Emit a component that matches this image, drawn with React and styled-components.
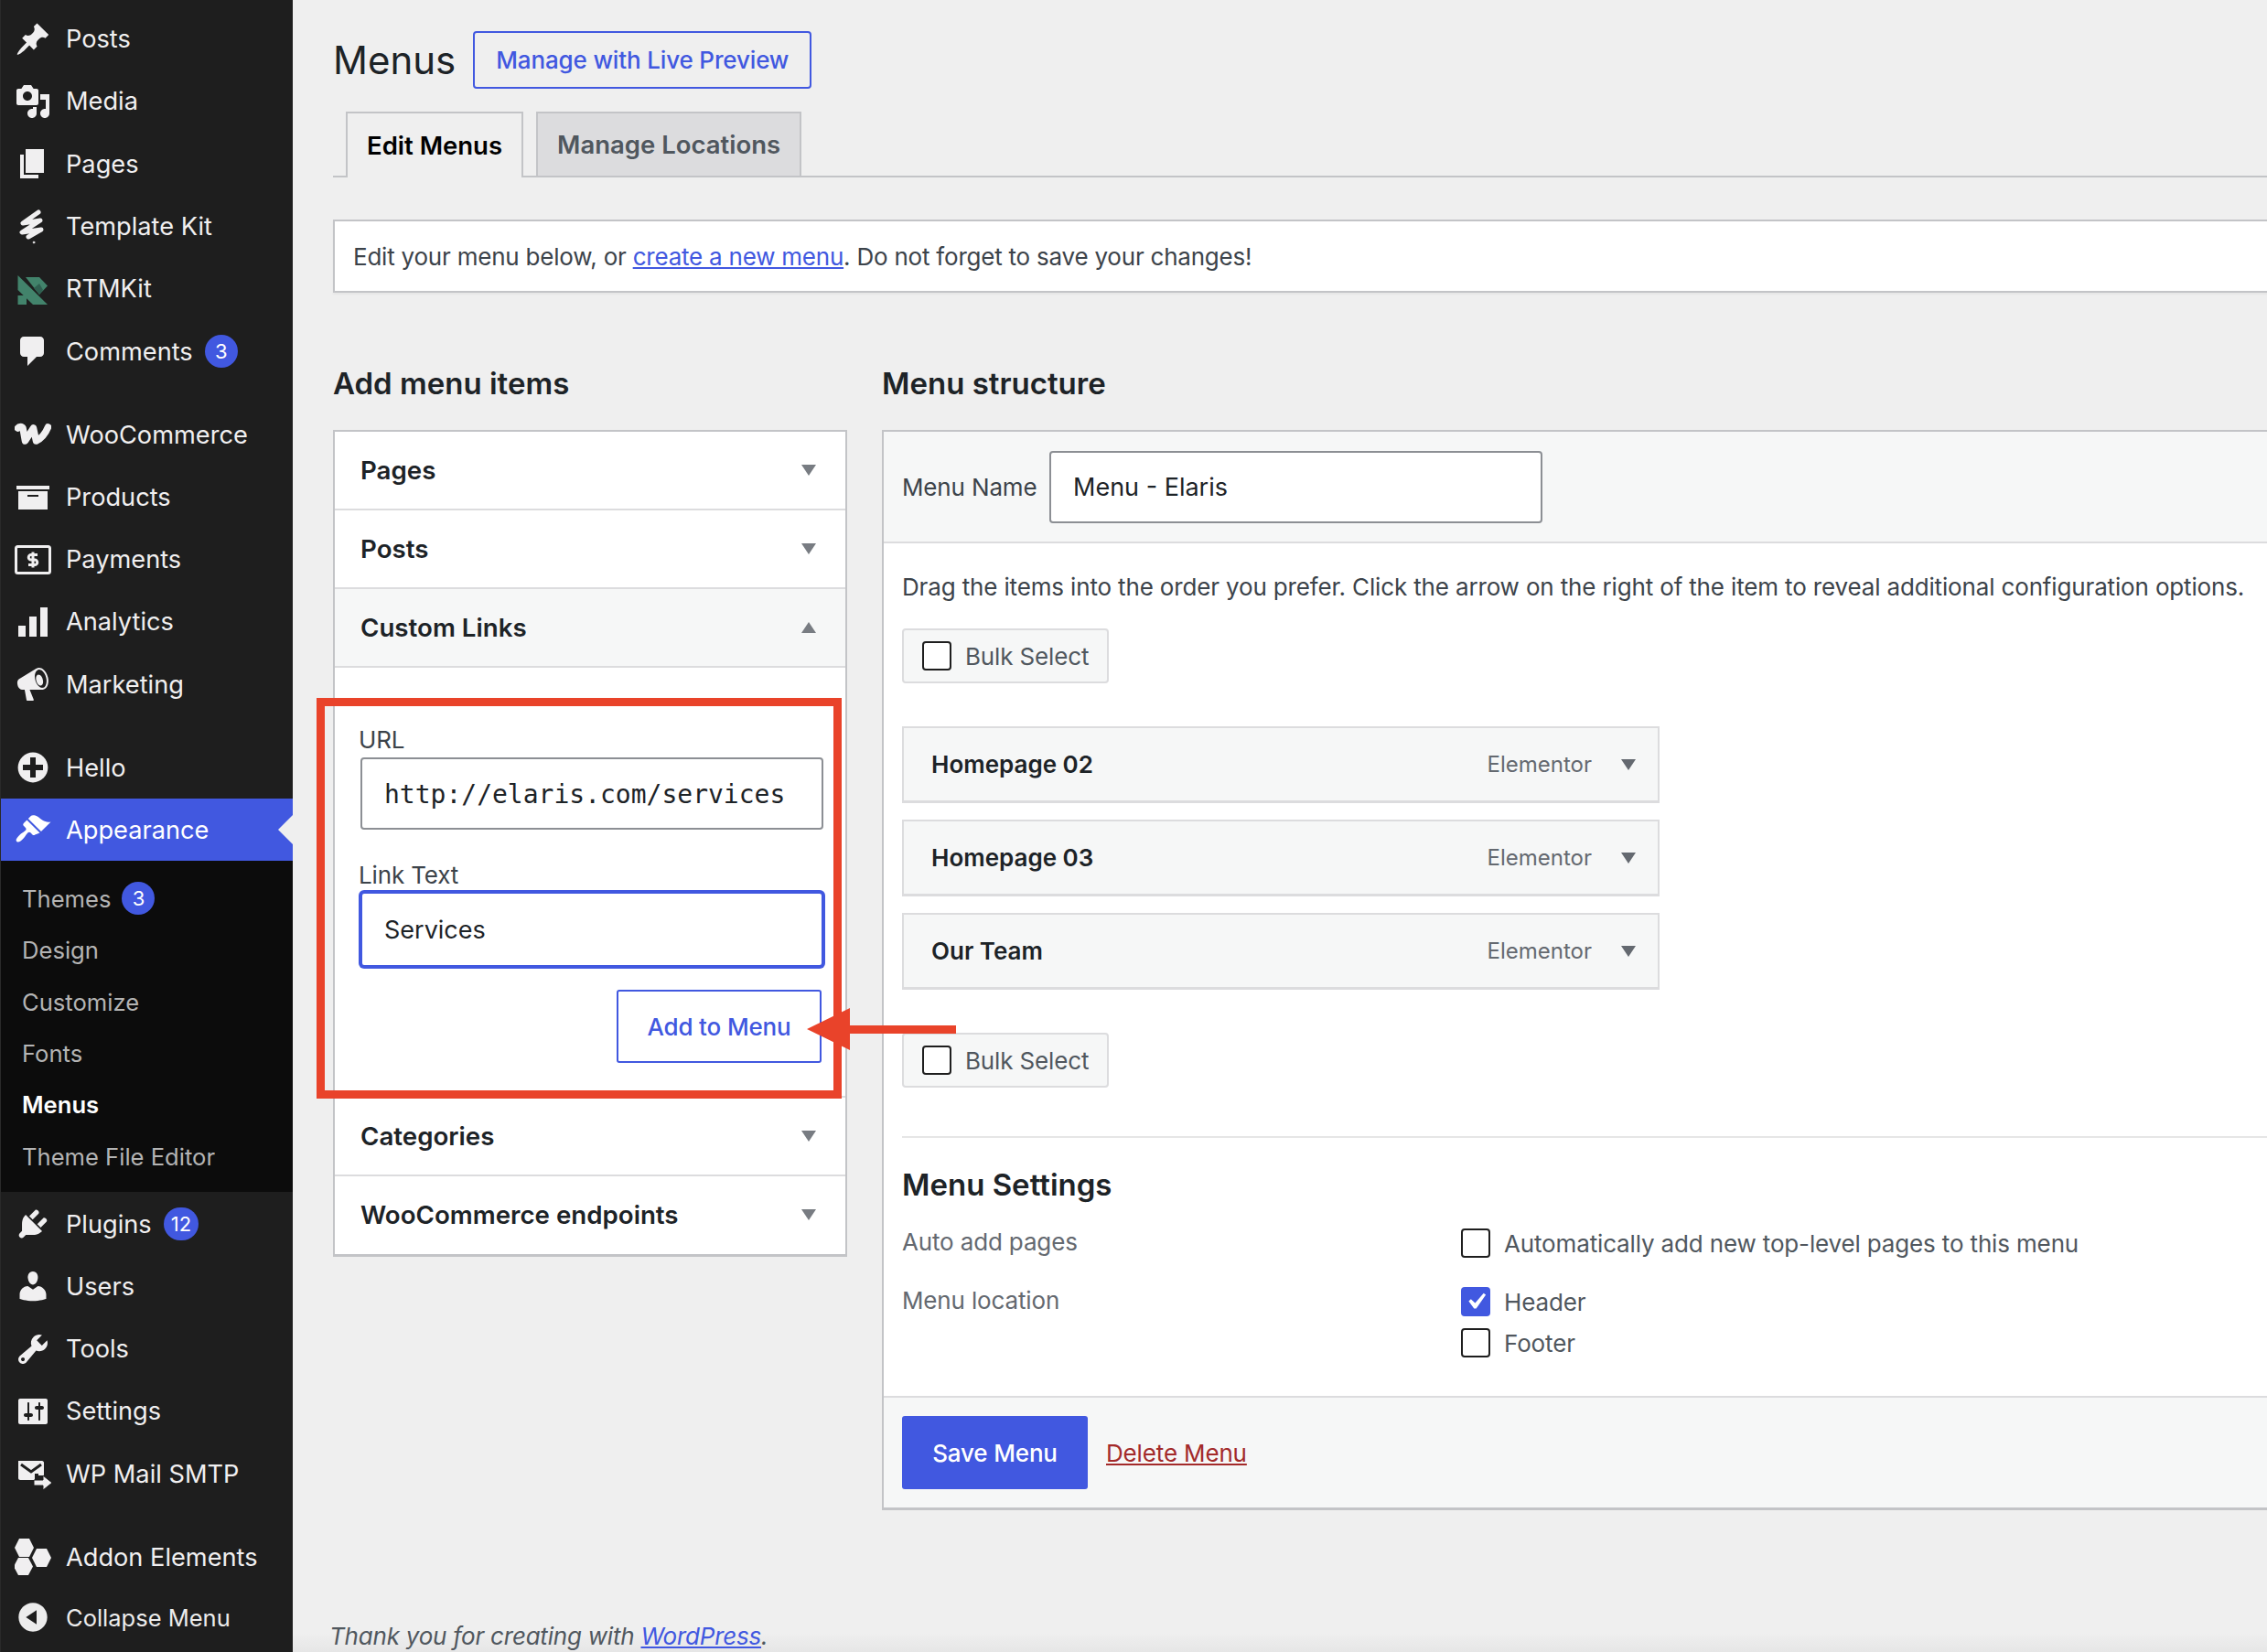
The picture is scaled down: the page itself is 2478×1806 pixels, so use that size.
import styled, { createGlobalStyle } from "styled-components";

const BLUE = "#4158e0";

const GlobalStyle = createGlobalStyle`
  html, body {
    margin: 0;
    padding: 0;
    width: 2478px;
    height: 1806px;
    overflow: hidden;
    background: #efefef;
  }
  * {
    box-sizing: border-box;
  }
  body {
    font-family: Inter, "Liberation Sans", sans-serif;
    font-size: 26px;
    letter-spacing: -0.15px;
    color: #3c434a;
  }
`;

const dash = {
  post: "M10.44 3.02l1.82-1.82 6.36 6.35-1.83 1.82c-1.05-.68-2.48-.57-3.41.36l-.75.75c-.92.93-1.04 2.35-.35 3.41l-1.83 1.82-2.41-2.41-2.8 2.79c-.42.42-3.38 2.71-3.8 2.29s1.86-3.39 2.28-3.81l2.79-2.79L4.1 9.36l1.83-1.82c1.05.69 2.48.57 3.4-.36l.75-.75c.93-.92 1.05-2.35.36-3.41z",
  media: "M13 11V4c0-.55-.45-1-1-1h-1.67L9 1H5L3.67 3H2c-.55 0-1 .45-1 1v7c0 .55.45 1 1 1h10c.55 0 1-.45 1-1zM7 4.5c1.38 0 2.5 1.12 2.5 2.5S8.38 9.5 7 9.5 4.5 8.38 4.5 7 5.62 4.5 7 4.5zM14 6h5v10.5c0 1.38-1.12 2.5-2.5 2.5S14 17.88 14 16.5s1.12-2.5 2.5-2.5c.17 0 .34.02.5.05V9h-3V6zm-4 8.05V13h2v3.5c0 1.38-1.12 2.5-2.5 2.5S7 17.88 7 16.5 8.12 14 9.5 14c.17 0 .34.02.5.05z",
  page: "M6 15V2h10v13H6zm-1 1h8v2H3V5h2v11z",
  comment: "M5 2h9c1.1 0 2 .9 2 2v7c0 1.1-.9 2-2 2h-2l-5 5v-5H5c-1.1 0-2-.9-2-2V4c0-1.1.9-2 2-2z",
  archive: "M19 4v2H1V4h18zM2 7h16v10H2V7zm11 3V9H7v1h6z",
  bars: "M18 18V2h-4v16h4zm-6 0V7H8v11h4zm-6 0v-6H2v6h4z",
  megaphone: "M18.15 5.94c.46 1.62.38 3.22-.02 4.48-.42 1.28-1.26 2.18-2.3 2.48-.16.06-.26.06-.4.06-.06.02-.12.02-.18.02-.06.02-.14.02-.22.02h-6.8l2.22 5.5c.02.14-.06.26-.14.34-.08.1-.24.16-.34.16H6.95c-.1 0-.26-.06-.34-.16-.08-.08-.16-.2-.14-.34l-1-5.5H4.25l-.02-.02c-.5.06-1.08-.18-1.54-.62s-.88-1.08-1.06-1.88c-.24-.8-.2-1.56-.02-2.2.18-.62.58-1.08 1.06-1.3l.02-.02 9-5.4c.1-.06.18-.1.24-.16.06-.04.14-.08.24-.12.16-.08.28-.12.5-.18 1.04-.3 2.24.1 3.22.98s1.76 2.18 2.22 3.86zm-2.58 5.98h-.02c.4-.1.74-.34 1.04-.7.58-.7.86-1.76.86-3.04-.02-.64-.1-1.3-.28-1.98-.34-1.36-1.02-2.5-1.78-3.24s-1.68-1.1-2.46-.88c-.82.22-1.4.96-1.7 2-.32 1.04-.28 2.36.06 3.72.38 1.36 1 2.5 1.8 3.24.78.74 1.62 1.1 2.48.88zm-2.54-7.08c.22-.04.42-.02.62.04.38.16.76.48 1.1 1s.58 1.14.7 1.84c.14.7.14 1.32-.02 1.86-.14.52-.42.9-.76 1.1-.34.2-.72.16-1.1-.04-.4-.18-.76-.52-1.1-1.02-.34-.52-.58-1.14-.7-1.84-.12-.7-.12-1.34.02-1.86.16-.54.44-.9.8-1.08.14-.06.28-.08.44-.1z",
  plus: "M15.8 4.2c3.2 3.21 3.2 8.39 0 11.6-3.21 3.2-8.39 3.2-11.6 0C1 12.59 1 7.41 4.2 4.2 7.41 1 12.59 1 15.8 4.2zm-4.3 11.3v-4h4v-3h-4v-4h-3v4h-4v3h4v4h3z",
  brush: "M14.48 11.06L7.41 3.99l1.5-1.5c.5-.56 2.3-.47 3.51.32 1.21.8 1.43 1.28 2.91 2.1 1.18.64 2.45 1.26 4.45.85zm-.71.71L6.7 4.7 4.93 6.47c-.39.39-.39 1.02 0 1.41l1.06 1.06c.39.39.39 1.03 0 1.42-.6.6-1.43 1.11-2.21 1.69-.35.26-.7.53-1.01.84-1.34 1.33-2.5 2.7-1.62 3.58.88.88 2.25-.28 3.58-1.62.31-.31.58-.66.84-1.01.58-.78 1.09-1.61 1.69-2.21.39-.39 1.03-.39 1.42 0l1.06 1.06c.39.39 1.02.39 1.41 0z",
  plugin: "M13.11 4.36L9.87 7.6 8 5.73l3.24-3.24c.35-.34 1.05-.2 1.56.32.52.51.66 1.21.31 1.55zm-8 1.77l.91-1.12 9.01 9.01-1.19.84c-.71.71-2.63 1.16-3.82 1.16H6.14L4.9 17.26c-.59.59-1.54.59-2.12 0-.59-.58-.59-1.53 0-2.12l1.24-1.24v-3.88c0-1.13.4-3.19 1.09-3.89zm7.26 3.97l3.24-3.24c.34-.35 1.04-.21 1.55.31.52.51.66 1.21.31 1.55l-3.24 3.25z",
  users: "M10 9.25c-2.27 0-2.73-3.44-2.73-3.44C7 4.02 7.82 2 9.97 2c2.16 0 2.98 2.02 2.71 3.81 0 0-.41 3.44-2.68 3.44zm0 2.57L12.72 10c2.39 0 4.52 2.33 4.52 4.53v2.49s-3.65 1.13-7.24 1.13c-3.65 0-7.24-1.13-7.24-1.13v-2.49c0-2.25 1.94-4.48 4.47-4.48z",
  tools: "M16.68 9.77c-1.34 1.34-3.3 1.67-4.95.99l-5.41 6.52c-.99.99-2.59.99-3.58 0s-.99-2.59 0-3.57l6.52-5.42c-.68-1.65-.35-3.61.99-4.95 1.28-1.28 3.12-1.62 4.72-1.06l-2.89 2.89 2.82 2.82 2.86-2.87c.53 1.58.18 3.39-1.08 4.65zM3.81 16.21c.4.39 1.04.39 1.43 0 .4-.4.4-1.04 0-1.43-.39-.4-1.03-.4-1.43 0-.39.39-.39 1.03 0 1.43z",
  settings: "M18 16V4c0-.55-.45-1-1-1H3c-.55 0-1 .45-1 1v12c0 .55.45 1 1 1h14c.55 0 1-.45 1-1zM8 11h1c.55 0 1 .45 1 1s-.45 1-1 1H8v1.5c0 .28-.22.5-.5.5s-.5-.22-.5-.5V13H6c-.55 0-1-.45-1-1s.45-1 1-1h1V5.5c0-.28.22-.5.5-.5s.5.22.5.5V11zm5-2h-1c-.55 0-1-.45-1-1s.45-1 1-1h1V5.5c0-.28.22-.5.5-.5s.5.22.5.5V7h1c.55 0 1 .45 1 1s-.45 1-1 1h-1v5.5c0 .28-.22.5-.5.5s-.5-.22-.5-.5V9z",
  collapse: "M10 2.16c4.33 0 7.84 3.51 7.84 7.84s-3.51 7.84-7.84 7.84S2.16 14.33 2.16 10 5.71 2.16 10 2.16zm2 11.72V6.12L6.18 9.97z",
};

const Dash = ({ name }) => (
  <svg width="40" height="40" viewBox="0 0 20 20" fill="currentColor">
    <path d={dash[name]} />
  </svg>
);

const TemplateKitIcon = () => (
  <svg width="40" height="40" viewBox="0 0 40 40" fill="none" stroke="currentColor" strokeWidth="5" strokeLinecap="round" strokeLinejoin="round">
    <path d="M26 4 L9 16 L28 13 L8 26 L29 23 L15 31" />
    <circle cx="21" cy="37" r="1" fill="currentColor" strokeWidth="0.6" />
  </svg>
);

const RtmIcon = () => (
  <svg width="40" height="40" viewBox="0 0 40 40">
    <g fill="#42836b">
      <polygon points="3.5,5 3.5,21 20,37 36,37" />
      <polygon points="12,7 27,7 36,16.5 27,26" />
      <polygon points="3.5,27 13,27 13,37 3.5,37" />
    </g>
    <polygon points="21,19 27,14 31,21 27,26" fill="#2f5f50" />
  </svg>
);

const WooIcon = () => (
  <svg width="40" height="40" viewBox="0 0 40 40" fill="none" stroke="currentColor" strokeWidth="7.5" strokeLinecap="round" strokeLinejoin="round">
    <path d="M3.5 13 C5 11 8 11 9 13 L11.5 27 L20.5 13 L23.5 27 C30 24 34 18 36.5 12" />
  </svg>
);

const PaymentsIcon = () => (
  <svg width="40" height="40" viewBox="0 0 40 40" fill="none" stroke="currentColor">
    <rect x="1.5" y="5.5" width="37" height="29" rx="2" strokeWidth="3" />
    <path d="M25 14.5h-7a2.5 2.5 0 0 0 0 5.5h4a2.5 2.5 0 0 1 0 5.5h-7" strokeWidth="3" />
    <path d="M20 11.5v17" strokeWidth="3" />
  </svg>
);

const MailIcon = () => (
  <svg width="40" height="40" viewBox="0 0 40 40">
    <path d="M4 6h26c1 0 2 1 2 2v14h-6v-2h-4v7H6c-1 0-2-1-2-2z" fill="currentColor" />
    <path d="M7 10l11 8 11-8" fill="none" stroke="#1e1e1e" strokeWidth="3" />
    <path d="M21 27h10v-5l10 8-10 8v-5H21z" fill="currentColor" stroke="#1e1e1e" strokeWidth="1" />
  </svg>
);

const AddonIcon = () => (
  <svg width="40" height="40" viewBox="0 0 40 40" fill="currentColor">
    <polygon points="5,0 16,0 21,10 16,20 5,20 0,10" />
    <polygon points="24,11 35,11 40,21 35,31 24,31 19,21" />
    <polygon points="4,21 15,21 20,30.5 15,40 4,40 -1,30.5" />
  </svg>
);

const mainItems = [
  [
    { label: "Posts", icon: <Dash name="post" /> },
    { label: "Media", icon: <Dash name="media" /> },
    { label: "Pages", icon: <Dash name="page" /> },
    { label: "Template Kit", icon: <TemplateKitIcon /> },
    { label: "RTMKit", icon: <RtmIcon /> },
    { label: "Comments", icon: <Dash name="comment" />, badge: "3" },
  ],
  [
    { label: "WooCommerce", icon: <WooIcon /> },
    { label: "Products", icon: <Dash name="archive" /> },
    { label: "Payments", icon: <PaymentsIcon /> },
    { label: "Analytics", icon: <Dash name="bars" /> },
    { label: "Marketing", icon: <Dash name="megaphone" /> },
  ],
];

const lowerItems = [
  { label: "Plugins", icon: <Dash name="plugin" />, badge: "12" },
  { label: "Users", icon: <Dash name="users" /> },
  { label: "Tools", icon: <Dash name="tools" /> },
  { label: "Settings", icon: <Dash name="settings" /> },
  { label: "WP Mail SMTP", icon: <MailIcon /> },
];

const subItems = ["Design", "Customize", "Fonts", "Menus", "Theme File Editor"];
const accordionTop = ["Pages", "Posts"];
const accordionBottom = ["Categories", "WooCommerce endpoints"];
const structureItems = ["Homepage 02", "Homepage 03", "Our Team"];

function SideItem({ item }) {
  return (
    <SideRow>
      <IconSlot>{item.icon}</IconSlot>
      {item.label}
      {item.badge && <TopBadge>{item.badge}</TopBadge>}
    </SideRow>
  );
}

function BulkSelect() {
  return (
    <BulkBox>
      <Checkbox />
      Bulk Select
    </BulkBox>
  );
}

function App() {
  return (
    <Page>
      <GlobalStyle />
      <Sidebar>
        {mainItems.map((group, i) => (
          <SideGroup key={i}>
            {group.map((item) => (
              <SideItem key={item.label} item={item} />
            ))}
          </SideGroup>
        ))}
        <SideGroup>
          <SideItem item={{ label: "Hello", icon: <Dash name="plus" /> }} />
          <ActiveRow>
            <IconSlot>
              <Dash name="brush" />
            </IconSlot>
            Appearance
          </ActiveRow>
          <SubMenu>
            <SubRow>
              Themes <Badge>3</Badge>
            </SubRow>
            {subItems.map((label) => (
              <SubRow key={label} $current={label === "Menus"}>
                {label}
              </SubRow>
            ))}
          </SubMenu>
          {lowerItems.map((item) => (
            <SideItem key={item.label} item={item} />
          ))}
        </SideGroup>
        <SideGroup>
          <SideItem item={{ label: "Addon Elements", icon: <AddonIcon /> }} />
          <CollapseRow>
            <IconSlot>
              <Dash name="collapse" />
            </IconSlot>
            Collapse Menu
          </CollapseRow>
        </SideGroup>
      </Sidebar>

      <Main>
        <Content>
          <TitleRow>
            <Title>Menus</Title>
            <OutlineButton>Manage with Live Preview</OutlineButton>
          </TitleRow>

          <Tabs>
            <Tab $active>Edit Menus</Tab>
            <Tab>Manage Locations</Tab>
          </Tabs>

          <Notice>
            Edit your menu below, or <TextLink>create a new menu</TextLink>. Do not forget to save your changes!
          </Notice>

          <Columns>
            <LeftColumn>
              <Heading>Add menu items</Heading>
              <Accordion>
                {accordionTop.map((label) => (
                  <AccordionRow key={label}>
                    {label}
                    <Caret />
                  </AccordionRow>
                ))}
                <AccordionRow $open>
                  Custom Links
                  <Caret $up />
                </AccordionRow>
                <AccordionBody>
                  <FieldLabel>URL</FieldLabel>
                  <UrlInput readOnly value="http://elaris.com/services" />
                  <FieldLabel $second>Link Text</FieldLabel>
                  <TextInput readOnly value="Services" />
                  <AddButton>Add to Menu</AddButton>
                </AccordionBody>
                {accordionBottom.map((label) => (
                  <AccordionRow key={label}>
                    {label}
                    <Caret />
                  </AccordionRow>
                ))}
              </Accordion>
            </LeftColumn>

            <RightColumn>
              <Heading>Menu structure</Heading>
              <StructurePanel>
                <NameBar>
                  <NameLabel>Menu Name</NameLabel>
                  <NameInput readOnly value="Menu - Elaris" />
                </NameBar>
                <StructureBody>
                  <DragText>
                    Drag the items into the order you prefer. Click the arrow on the right of the item to reveal additional configuration options.
                  </DragText>
                  <BulkSelect />
                  <ItemList>
                    {structureItems.map((label) => (
                      <MenuItem key={label}>
                        <MenuItemTitle>{label}</MenuItemTitle>
                        <MenuItemType>Elementor</MenuItemType>
                        <ItemCaret />
                      </MenuItem>
                    ))}
                  </ItemList>
                  <BulkSelect />
                  <Divider />
                  <SettingsHeading>Menu Settings</SettingsHeading>
                  <SettingRow>
                    <SettingLabel>Auto add pages</SettingLabel>
                    <OptionList>
                      <Option>
                        <Checkbox />
                        Automatically add new top-level pages to this menu
                      </Option>
                    </OptionList>
                  </SettingRow>
                  <SettingRow $location>
                    <SettingLabel>Menu location</SettingLabel>
                    <OptionList>
                      <Option>
                        <Checkbox $checked>
                          <CheckMark viewBox="0 0 20 20">
                            <path d="M14.83 4.89l1.34.94-5.81 8.38H9.02L5.78 9.67l1.34-1.25 2.57 2.4z" />
                          </CheckMark>
                        </Checkbox>
                        Header
                      </Option>
                      <Option>
                        <Checkbox />
                        Footer
                      </Option>
                    </OptionList>
                  </SettingRow>
                </StructureBody>
                <SaveBar>
                  <SaveButton>Save Menu</SaveButton>
                  <DeleteLink>Delete Menu</DeleteLink>
                </SaveBar>
              </StructurePanel>
            </RightColumn>
          </Columns>

          <FooterText>
            Thank you for creating with <TextLink>WordPress</TextLink>.
          </FooterText>
        </Content>

        <Highlight />
        <Arrow viewBox="0 0 170 50" width="170" height="50">
          <polygon points="3,25 50,2 50,21 166,21 166,30 50,30 50,48" fill="#e9432a" />
        </Arrow>
      </Main>
    </Page>
  );
}

const Page = styled.div`
  display: flex;
  width: 2478px;
  height: 1806px;
  overflow: hidden;
`;

const Sidebar = styled.nav`
  width: 320px;
  flex: none;
  height: 100%;
  padding-top: 8px;
  background: #1e1e1e;
  border-left: 1px solid #2a2a2a;
  color: #f0eff0;
  letter-spacing: 0;
`;

const SideGroup = styled.div`
  margin-bottom: 22.6px;
`;

const SideRow = styled.div`
  display: flex;
  align-items: center;
  height: 68.3px;
  padding: 1px 0 0 15px;
  font-size: 27.2px;
  white-space: nowrap;
`;

const IconSlot = styled.span`
  display: flex;
  width: 40px;
  height: 40px;
  margin-right: 16px;
  flex: none;
`;

const ActiveRow = styled(SideRow)`
  position: relative;
  background: ${BLUE};
  color: #fff;

  &::after {
    content: "";
    position: absolute;
    right: 0;
    top: 50%;
    margin-top: -16px;
    border: 16px solid transparent;
    border-left: none;
    border-right-color: #efefef;
  }
`;

const CollapseRow = styled(SideRow)`
  font-size: 25.5px;
  color: #ececec;
  margin-top: -2px;
`;

const Badge = styled.span`
  display: inline-flex;
  align-items: center;
  justify-content: center;
  min-width: 36px;
  height: 36px;
  margin-left: 12px;
  padding: 0 8px;
  border-radius: 18px;
  background: ${BLUE};
  color: #fff;
  font-size: 22px;
  font-weight: 400;
`;

const TopBadge = styled(Badge)`
  margin-left: 13px;
`;

const SubMenu = styled.div`
  background: #0c0c0c;
  padding: 13px 0 11px;
`;

const SubRow = styled.div`
  display: flex;
  align-items: center;
  height: 56.4px;
  padding-left: 23px;
  font-size: 25.6px;
  color: ${(p) => (p.$current ? "#fff" : "#b4b4b4")};
  font-weight: ${(p) => (p.$current ? 600 : 400)};
`;

const Main = styled.main`
  position: relative;
  flex: 1;
  height: 100%;
  overflow: hidden;
  background: linear-gradient(to bottom, #efefef 1785px, #e6e6e6 1806px);
`;

const Content = styled.div`
  width: 2260px;
  padding: 34px 0 0 44px;
`;

const TitleRow = styled.div`
  display: flex;
  align-items: center;
  gap: 19px;
`;

const Title = styled.h1`
  margin: 0;
  font-size: 42px;
  font-weight: 400;
  letter-spacing: 0;
  color: #1d2327;
`;

const OutlineButton = styled.button`
  height: 63px;
  width: 370px;
  padding: 0;
  background: transparent;
  border: 2px solid ${BLUE};
  border-radius: 4px;
  color: ${BLUE};
  font: 500 26px Inter, sans-serif;
  letter-spacing: -0.15px;
`;

const Tabs = styled.div`
  display: flex;
  gap: 14px;
  height: 72px;
  margin-top: 25px;
  padding-left: 14px;
  border-bottom: 2px solid #c3c4c7;
`;

const Tab = styled.div`
  display: flex;
  align-items: center;
  padding: 0 21px;
  height: 72px;
  border: 2px solid #c3c4c7;
  border-bottom: ${(p) => (p.$active ? "none" : "2px solid #c3c4c7")};
  background: ${(p) => (p.$active ? "#efefef" : "#dcdcde")};
  color: ${(p) => (p.$active ? "#000" : "#50575e")};
  font-size: 27.5px;
  font-weight: 600;
  letter-spacing: 0;
`;

const Notice = styled.div`
  height: 80px;
  margin-top: 46px;
  padding-left: 20px;
  line-height: 78px;
  letter-spacing: -0.22px;
  background: #fff;
  border: 2px solid #c3c4c7;
  box-shadow: 0 2px 2px rgba(0, 0, 0, 0.04);
`;

const TextLink = styled.a`
  color: ${BLUE};
  text-decoration: underline;
`;

const Columns = styled.div`
  display: flex;
  gap: 38px;
  margin-top: 77px;
`;

const LeftColumn = styled.div`
  width: 562px;
  flex: none;
`;

const RightColumn = styled.div`
  flex: 1;
`;

const Heading = styled.h2`
  margin: 0 0 29px;
  font-size: 33px;
  line-height: 44px;
  font-weight: 600;
  letter-spacing: 0;
  color: #1d2327;
`;

const Accordion = styled.div`
  background: #fff;
  border: 2px solid #c3c4c7;
  border-bottom-width: 3px;
`;

const AccordionRow = styled.div`
  display: flex;
  align-items: center;
  justify-content: space-between;
  height: 86px;
  padding: 0 32px 0 28px;
  border-bottom: 2px solid #dcdcde;
  background: ${(p) => (p.$open ? "#f6f7f7" : "#fff")};
  color: #1d2327;
  font-size: 27.7px;
  font-weight: 600;
  letter-spacing: 0;

  &:last-child {
    border-bottom: none;
    height: 85px;
    padding-bottom: 1px;
  }
`;

const Caret = styled.span`
  width: 0;
  height: 0;
  border-left: 8px solid transparent;
  border-right: 8px solid transparent;
  border-top: ${(p) => (p.$up ? "none" : "12px solid #787c82")};
  border-bottom: ${(p) => (p.$up ? "12px solid #787c82" : "none")};
`;

const AccordionBody = styled.div`
  display: flex;
  flex-direction: column;
  height: 470px;
  padding: 62px 24px 0 28px;
  border-bottom: 2px solid #dcdcde;
`;

const FieldLabel = styled.label`
  display: block;
  height: 36px;
  line-height: 34px;
  margin-left: -2px;
  margin-top: ${(p) => (p.$second ? "33px" : "0")};
  color: #3c434a;
`;

const UrlInput = styled.input`
  width: 506px;
  height: 79px;
  padding: 2px 24px 0;
  background: #fff;
  border: 2px solid #8c8f94;
  border-radius: 4px;
  outline: none;
  color: #1d2327;
  font: 28px "DejaVu Sans Mono", "Liberation Mono", monospace;
`;

const TextInput = styled.input`
  width: 506px;
  height: 82px;
  margin-top: -1px;
  padding: 0 24px;
  background: #fff;
  border: 2px solid ${BLUE};
  border-radius: 4px;
  box-shadow: 0 0 0 2px ${BLUE};
  outline: none;
  color: #1d2327;
  font: 27px Inter, sans-serif;
`;

const AddButton = styled.button`
  align-self: flex-end;
  width: 224px;
  height: 80px;
  margin: 25px 2px 0 0;
  padding: 0;
  background: #fff;
  border: 2px solid ${BLUE};
  border-radius: 3px;
  color: ${BLUE};
  font: 500 26px Inter, sans-serif;
  letter-spacing: -0.15px;
`;

const StructurePanel = styled.div`
  background: #fff;
  border: 2px solid #c3c4c7;
  border-bottom-width: 3px;
`;

const NameBar = styled.div`
  display: flex;
  align-items: center;
  height: 122px;
  padding-left: 20px;
  background: #f6f7f7;
  border-bottom: 2px solid #dcdcde;
`;

const NameLabel = styled.label`
  width: 161px;
  flex: none;
  color: #3c434a;
`;

const NameInput = styled.input`
  width: 539px;
  height: 79px;
  padding: 1px 24px 0;
  background: #fff;
  border: 2px solid #8c8f94;
  border-radius: 4px;
  outline: none;
  color: #1d2327;
  font: 27px Inter, sans-serif;
`;

const StructureBody = styled.div`
  height: 932px;
  padding: 28px 0 0 20px;
`;

const DragText = styled.p`
  margin: 0 0 25px;
  line-height: 40px;
  white-space: nowrap;
`;

const BulkBox = styled.div`
  display: flex;
  align-items: center;
  width: 226px;
  height: 60px;
  padding-left: 20px;
  background: #f6f7f7;
  border: 2px solid #dcdcde;
  border-radius: 4px;
  color: #50575e;
`;

const Checkbox = styled.span`
  display: inline-flex;
  align-items: center;
  justify-content: center;
  width: 32px;
  height: 32px;
  margin-right: 15px;
  flex: none;
  background: ${(p) => (p.$checked ? BLUE : "#fff")};
  border: ${(p) => (p.$checked ? "none" : "2px solid #1e1e1e")};
  border-radius: 4px;
`;

const CheckMark = styled.svg`
  width: 36px;
  height: 36px;
  flex: none;
  fill: #fff;
`;

const ItemList = styled.div`
  display: flex;
  flex-direction: column;
  gap: 18px;
  width: 828px;
  margin: 47px 0;
`;

const MenuItem = styled.div`
  display: flex;
  align-items: center;
  height: 84px;
  padding: 0 24px 0 30px;
  background: #f6f7f7;
  border: 2px solid #dcdcde;
  border-bottom-width: 3px;
`;

const MenuItemTitle = styled.span`
  flex: 1;
  color: #1d2327;
  font-weight: 600;
  letter-spacing: 0;
`;

const MenuItemType = styled.span`
  margin-right: 32px;
  font-size: 24px;
  letter-spacing: 0;
  color: #646970;
`;

const ItemCaret = styled.span`
  width: 0;
  height: 0;
  border-left: 8px solid transparent;
  border-right: 8px solid transparent;
  border-top: 12px solid #646970;
`;

const Divider = styled.hr`
  margin: 53px 0 0;
  border: none;
  border-top: 2px solid #e6e6e6;
`;

const SettingsHeading = styled.h3`
  margin: 29px 0 26px;
  font-size: 33px;
  line-height: 44px;
  font-weight: 600;
  letter-spacing: 0;
  color: #1d2327;
`;

const SettingRow = styled.div`
  display: grid;
  grid-template-columns: 611px 1fr;
  margin-top: ${(p) => (p.$location ? "32px" : "0")};
`;

const SettingLabel = styled.div`
  line-height: 30px;
  color: #646970;
`;

const OptionList = styled.div`
  display: flex;
  flex-direction: column;
  gap: 13px;
`;

const Option = styled.div`
  display: flex;
  align-items: center;
  height: 32px;
  color: #50575e;
`;

const SaveBar = styled.div`
  display: flex;
  align-items: center;
  height: 122px;
  padding-left: 20px;
  background: #f6f7f7;
  border-top: 2px solid #dcdcde;
`;

const SaveButton = styled.button`
  width: 203px;
  height: 80px;
  padding: 0;
  background: ${BLUE};
  border: none;
  border-radius: 3px;
  color: #fff;
  font: 500 26px Inter, sans-serif;
  letter-spacing: -0.15px;
`;

const DeleteLink = styled.a`
  margin-left: 20px;
  color: #a32a2a;
  text-decoration: underline;
`;

const FooterText = styled.p`
  margin: 118px 0 0 -4px;
  line-height: 40px;
  font-style: italic;
  letter-spacing: -0.22px;
  color: #50575e;
`;

const Highlight = styled.div`
  position: absolute;
  left: 26px;
  top: 763px;
  width: 574px;
  height: 438px;
  border: 9px solid #e9432a;
`;

const Arrow = styled.svg`
  position: absolute;
  left: 559px;
  top: 1100px;
`;

export default App;
